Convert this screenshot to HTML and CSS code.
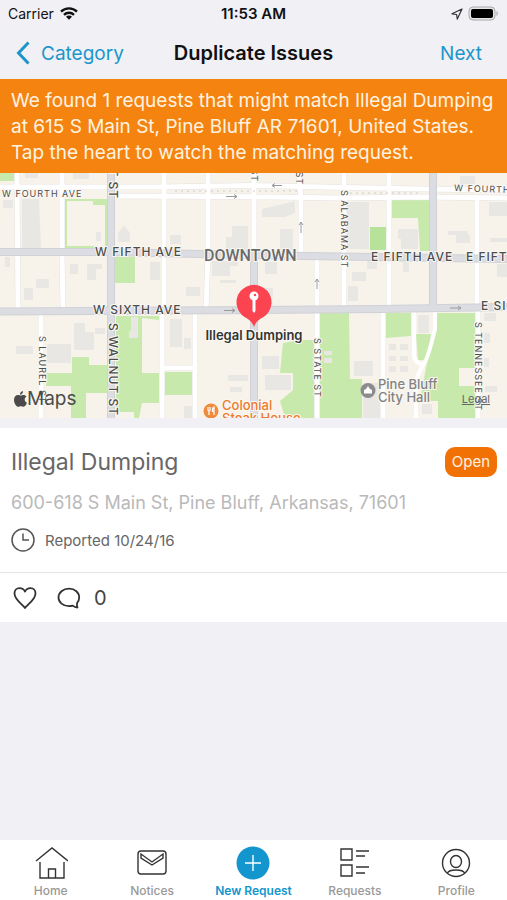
FILE: index.html
```html
<!DOCTYPE html>
<html lang="en">
<head>
  <meta charset="utf-8">
  <meta name="viewport" content="width=device-width, initial-scale=1">
  <title>Duplicate Issues</title>
  <link rel="stylesheet" href="styles.css">
</head>
<body>
  <div class="status-bar">
    <div class="status-left">
      <span>Carrier</span>
      <svg width="18" height="13" viewBox="0 0 18 13" fill="none" stroke="#111" stroke-width="2.4">
        <path d="M1 4.6a11.5 11.5 0 0 1 16 0"/>
        <path d="M4 7.8a7.2 7.2 0 0 1 10 0"/>
        <path d="M9 12.8L6 9.8a4.2 4.2 0 0 1 6 0z" fill="#111" stroke="none"/>
      </svg>
    </div>
    <div class="status-time">11:53 AM</div>
    <div class="status-right">
      <svg width="12" height="12" viewBox="0 0 12 12" fill="none" stroke="#333" stroke-width="1.2" stroke-linejoin="round">
        <path d="M11 1L1 5.8l4.6.7.7 4.6z"/>
      </svg>
      <svg width="31" height="15" viewBox="0 0 31 15">
        <rect x="1" y="1" width="26" height="13" rx="4" fill="#e6e6e6" stroke="#aaa"/>
        <rect x="3" y="3" width="22" height="9" rx="2" fill="#000"/>
        <path d="M28.5 5v5a3 3 0 0 0 0-5z" fill="#aaa"/>
      </svg>
    </div>
  </div>

  <header class="nav-bar">
    <button class="nav-button back" type="button">
      <svg width="14" height="24" viewBox="0 0 14 24" fill="none" stroke="#1b96cb" stroke-width="3">
        <path d="M12.5 1.5L2.5 12l10 10.5"/>
      </svg>
      Category
    </button>
    <h1>Duplicate Issues</h1>
    <button class="nav-button next" type="button">Next</button>
  </header>

  <p class="banner">We found 1 requests that might match Illegal Dumping at 615 S Main St, Pine Bluff AR 71601, United States. Tap the heart to watch the matching request.</p>

  <div class="map">
    <svg class="map-canvas" viewBox="0 0 507 245" preserveAspectRatio="xMidYMid slice">
      <rect width="507" height="245" fill="#f7f3eb"/>

      <!-- buildings -->
      <g fill="#e9e7e4">
        <path d="M22 26h17l2 50H22zM3 27h10v8H3zM25 0h13v5H25zM73 0h16v6H73zM96 59h5v9h-5zM118 60l6-8 6 8v9h-12zM36 106h13v9H36zM24 115h9v12h-9zM5 84h5v10H5zM70 91h8v10h-8zM87 91h15v5h-6v11h-9zM150 89h10v18h-10z"/>
        <path d="M170 62h11v9h-11zM232 53h16v26h-16zM226 64h8v20h-8zM262 36l33-8v12l-10 4h-23zM280 56h13v22h-13zM265 89h12v12h-12zM212 88h26v5h-8v10h-18zM186 114h14v9h-14zM262 115h11v9h-11zM220 107h16v3h-16z"/>
        <path d="M344 29h25v47h-25zM398 56h20v20h-17v-10h-3zM403 89h6v10h-6zM448 58h20v4h-20zM456 62h14v8h-14zM489 29h18v14h-18zM497 91h10v13h-10zM352 99h14v9h-14zM348 113h10v15h-10zM367 88h10v8h-10zM490 65h17v4h-17zM460 3h15v8h-15z"/>
        <path d="M47 171h24v19H47zM74 150h11v9h9v18H74zM16 173h17v8H16zM95 155h10v6H95zM170 146h12v28h-12zM184 165h7v11h-7zM228 202h20v6h-20zM262 183h17v13h-17zM265 202h26v15h-26zM230 214h12v5h-12zM184 233h8v12h-8z"/>
        <path d="M354 188h19v15h-19zM418 142h11v18h-11zM363 210h18v35h-18zM422 231h10v10h-10zM484 140h12v8h-12zM484 160h6v10h-6zM484 185h5v9h-5zM485 213h12v6h-12zM389 171h7v6h-7zM400 171h8v6h-8zM389 183h7v5h-7zM400 183h8v5h-8zM389 193h7v6h-7zM400 193h8v6h-8z"/>
      </g>

      <!-- parks -->
      <g fill="#c7eaac">
        <path d="M0 0h19v8H0zM64 26h43v6H93v-4H67v45h28v4H64zM107 26v50h-2V26zM114 84h21v26h-21z"/>
        <path d="M392 24h38v54h-10l-2-33h-26z"/>
        <path d="M370 54h17l-1 23h-16z" fill="#b7e299"/>
        <path d="M72 184h17v8h19v28H86v25H71v-32H46v-13h26zM116 143h43v4l-17-2v55h18v30h-18l-3 15h-5v-6h-18z"/>
        <path d="M165 199h29v23h-29zM283 170l17-3h14v78h-29l-5-17 13-11v-17h-13zM320 140h29l1 66h12v39h-42zM386 140h25v23l-25 2zM416 161h15l-3 26h-10zM437 140h38v55h-16v18h16v32h-37v-17h-18l4-23z"/>
      </g>
      <path d="M131 144h7v21h-9v-7h2zM324 178h8v4h-8zM324 185h8v5h-8z" fill="#e9e7e4"/>

      <!-- side streets, grey casing under white -->
      <g fill="none">
        <path stroke="#e4e2e0" stroke-width="6" d="M0 14L160 14 250 12.500 300 13.500 420 16 507 17M107 23L230 23.500 340 25 420 24 507 25M17 0l1 136M62 0v80l1 57M164 0v137M208 0v80l-2 57M254 0v80M299 0l2 28v52M317 85v48M344 0v137M389 0v137M477 26v109M41 140v105M162 140v105M195 140v105M162 195h33M317 140v105M383 140v105M478 138v107"/>
        <path stroke="#fff" stroke-width="5" d="M0 14L160 14 250 12.500 300 13.500 420 16 507 17M107 23L230 23.500 340 25 420 24 507 25M17 0l1 136M62 0v80l1 57M164 0v137M208 0v80l-2 57M254 0v80M299 0l2 28v52M317 85v48M344 0v137M389 0v137M477 26v109M41 140v105M162 140v105M195 140v105M162 195h33M317 140v105M383 140v105M478 138v107"/>
        <path stroke="#fff" stroke-width="4" d="M414 138v45q1 7 9 9 4-3 12-36v-18M423 192q-7 12-7 20v33"/>
      </g>

      <!-- main avenues -->
      <g fill="none">
        <path stroke="#d0d1d6" stroke-width="8" d="M0 79h110L200 81l105 2 202 3M0 138.500L170 137.500 380 136 507 134M111 0v245M254 83v162M433 0v136"/>
        <path stroke="#dcdde3" stroke-width="6" d="M0 79h110L200 81l105 2 202 3M0 138.500L170 137.500 380 136 507 134M111 0v245M254 83v162M433 0v136"/>
      </g>

      <!-- one way arrows -->
      <g stroke="#9a9a9a" fill="none">
        <path d="M226 23.500h11m-3-2l3 2-3 2M282 12.500h-10m3-2l-3 2 3 2M301 60V49m-2 3l2-3 2 3M317 116v-10m-2 3l2-3 2 3M224 137.500h11m-3-2l3 2-3 2M450 135h11m-3-2l3 2-3 2"/>
        <path stroke="#ccc" stroke-dasharray="2 4" d="M175 18h125M350 20h70"/>
      </g>

      <!-- street names -->
      <g class="street minor">
        <text x="2" y="23.500">W FOURTH AVE</text>
        <text x="454" y="18" transform="rotate(2 454 18)">W FOURTH AVE</text>
        <text transform="translate(341 17) rotate(90)">S ALABAMA ST</text>
        <text transform="translate(39 163) rotate(90)">S LAUREL ST</text>
        <text transform="translate(314 165) rotate(90)">S STATE ST</text>
        <text transform="translate(475 149) rotate(90)">S TENNESSEE ST</text>
        <text transform="translate(251 9) rotate(90)" text-anchor="end">S MAIN ST</text>
        <text transform="translate(296 12) rotate(90)" text-anchor="end">S PINE ST</text>
      </g>
      <g class="street major">
        <text x="95" y="83">W FIFTH AVE</text>
        <text x="371" y="88">E FIFTH AVE</text>
        <text x="466" y="88">E FIFTH AVE</text>
        <text x="93" y="141">W SIXTH AVE</text>
        <text x="481" y="137">E SIXTH AVE</text>
        <text transform="translate(109 26) rotate(90)" text-anchor="end">S WALNUT ST</text>
        <text transform="translate(109 150) rotate(90)">S WALNUT ST</text>
      </g>
      <text class="district" x="204" y="88">DOWNTOWN</text>

      <!-- places -->
      <circle cx="368" cy="217.500" r="7.500" fill="#8c8c8c"/>
      <path d="M364 220.500h8v-3.500l-2-1-2-3-2 3-2 1z" fill="#fff"/>
      <g class="place">
        <text x="378" y="216">Pine Bluff</text>
        <text x="378" y="229">City Hall</text>
      </g>
      <circle cx="211" cy="238" r="7.500" fill="#f08a3c"/>
      <path d="M208 234v3q0 1 1 1v4M210 234v4M214 242v-8q-2 1-1.500 4.500H214" fill="none" stroke="#fff" stroke-width="1.200"/>
      <g class="place food">
        <text x="222" y="237">Colonial</text>
        <text x="222" y="250">Steak House</text>
      </g>

      <!-- pin -->
      <path d="M254 154c-2-6-6-8-9.500-10a17.500 17.500 0 1 1 19 0c-3.500 2-7.500 4-9.500 10z" fill="#fb4450"/>
      <path d="M252.500 126h3v12l-1.500 2-1.500-2z" fill="#fff"/>
      <circle cx="254" cy="123" r="4.500" fill="#fff"/>
      <circle cx="255" cy="122" r="1.200" fill="#fb4450"/>
      <text class="pin-name" x="254" y="167" text-anchor="middle">Illegal Dumping</text>
    </svg>
    <div class="map-brand">
      <svg width="13" height="16" viewBox="0 0 13 16" fill="#4b4b4b">
        <path d="M9 0c.2 2-1.200 3.700-3 3.700C5.800 2 7.300.3 9 0zM6.700 4.600C7.500 4.600 8.300 4 9.600 4c1.100 0 2.200.6 2.900 1.600-2.600 1.500-2.200 5.100.5 6.200-.6 1.700-2 4-3.500 4-1 0-1.400-.6-2.600-.6s-1.700.6-2.600.6C2.400 15.800 0 12.300 0 9c0-3.200 2-4.900 3.900-4.900 1.200 0 2 .5 2.800.5z"/>
      </svg>
      <span>Maps</span>
    </div>
    <a class="map-legal" href="#">Legal</a>
  </div>

  <main class="card">
    <div class="card-body">
      <div class="card-head">
        <h2>Illegal Dumping</h2>
        <span class="badge">Open</span>
      </div>
      <p class="address">600-618 S Main St, Pine Bluff, Arkansas, 71601</p>
      <div class="reported">
        <svg width="24" height="24" viewBox="0 0 24 24" fill="none" stroke="#555" stroke-width="1.500">
          <circle cx="12" cy="12" r="11"/>
          <path d="M12 5.500V12h6"/>
        </svg>
        <span>Reported 10/24/16</span>
      </div>
    </div>
    <div class="card-actions">
      <button type="button" aria-label="Watch">
        <svg width="24" height="22" viewBox="0 0 24 22" fill="none" stroke="#333" stroke-width="1.800" stroke-linejoin="round">
          <path d="M12 21C9 17 1.500 12.500 1.500 6.500 1.500 3.500 3.500 1.200 6.500 1.200c2.500 0 4.500 1.300 5.500 3.300 1-2 3-3.300 5.500-3.300 3 0 5 2.300 5 5.300C22.500 12.500 15 17 12 21z"/>
        </svg>
      </button>
      <button type="button" aria-label="Comments">
        <svg width="24" height="22" viewBox="0 0 24 22" fill="none" stroke="#333" stroke-width="1.800" stroke-linejoin="round">
          <path d="M20.500 20.500c-2 0-3.500-.7-4.700-1.800-1.200.3-2.500.5-3.800.5C6 19.200 1.500 15.300 1.500 10.500S6 1.700 12 1.700s10.200 3.900 10.200 8.800c0 2.300-1 4.300-2.200 5.800-.2 1.700-.1 3 .5 4.200z"/>
        </svg>
        <span>0</span>
      </button>
    </div>
  </main>

  <nav class="tab-bar">
    <a href="#">
      <svg width="34" height="34" viewBox="0 0 34 34" fill="none" stroke="#333" stroke-width="1.400">
        <path d="M2 15L18 2l16 13M6 16v16h24V16M14.500 32v-9h7v9"/>
      </svg>
      Home
    </a>
    <a href="#">
      <svg width="34" height="34" viewBox="0 0 34 34" fill="none" stroke="#333" stroke-width="1.400">
        <rect x="3" y="5" width="28" height="23" rx="3"/>
        <path d="M6 8v4l11 7 11-7V8l-11 8z"/>
      </svg>
      Notices
    </a>
    <a class="active" href="#">
      <svg width="34" height="34" viewBox="0 0 34 34">
        <circle cx="17" cy="17" r="16.500" fill="#1296cd"/>
        <path d="M17 9v16M9 17h16" stroke="#fff" stroke-width="1.400"/>
      </svg>
      New Request
    </a>
    <a href="#">
      <svg width="34" height="34" viewBox="0 0 34 34" fill="none" stroke="#333" stroke-width="1.400">
        <path d="M3 3h11v11H3zM3 19h11v11H3zM18 5h13M18 10h9M18 21h13M18 27h9"/>
      </svg>
      Requests
    </a>
    <a href="#">
      <svg width="34" height="34" viewBox="0 0 34 34" fill="none" stroke="#333" stroke-width="1.400">
        <circle cx="17" cy="17" r="13.500"/>
        <ellipse cx="17" cy="15.500" rx="5.500" ry="6"/>
        <path d="M8.500 27c1.500-4 15.500-4 17 0"/>
      </svg>
      Profile
    </a>
  </nav>
</body>
</html>
```
FILE: styles.css
```css
* {
  box-sizing: border-box;
}
body {
  margin: 0;
  min-height: 100vh;
  display: flex;
  flex-direction: column;
  background: #f0f0f5;
  color: #111;
  font-family: Inter, "Liberation Sans", sans-serif;
}
h1, h2, p {
  margin: 0;
  font-weight: 400;
}
button {
  padding: 0;
  border: none;
  background: none;
  font-family: inherit;
  cursor: pointer;
}
svg {
  display: block;
}

.status-bar {
  display: grid;
  grid-template-columns: 1fr auto 1fr;
  align-items: center;
  height: 27px;
  padding: 0 8px;
  font-size: 14px;
}
.status-left {
  display: flex;
  align-items: center;
  gap: 6px;
}
.status-time {
  font-size: 15px;
  font-weight: 600;
}
.status-right {
  display: flex;
  align-items: center;
  justify-content: flex-end;
  gap: 5px;
}

.nav-bar {
  display: grid;
  grid-template-columns: 1fr auto 1fr;
  align-items: center;
  height: 52px;
  padding: 0 16px;
}
.nav-bar h1 {
  font-size: 20px;
  font-weight: 600;
}
.nav-button {
  color: #1b96cb;
  font-size: 19px;
}
.back {
  display: flex;
  align-items: center;
  gap: 11px;
  justify-self: start;
}
.next {
  justify-self: end;
  padding-right: 9px;
}

.banner {
  padding: 9px 11px 7px;
  background: #f58310;
  color: #fff3e0;
  font-size: 19px;
  line-height: 26px;
}

.map {
  position: relative;
  overflow: hidden;
}
.map-canvas {
  width: 100%;
  height: auto;
}
.map text {
  paint-order: stroke;
  stroke: #faf8f3;
  stroke-width: 2px;
  stroke-linejoin: round;
}
.street {
  fill: #4d4d4d;
}
.minor {
  font-size: 9px;
  letter-spacing: 1px;
}
.major {
  font-size: 12px;
  font-weight: 500;
  letter-spacing: 1px;
}
.district {
  fill: #6b6b6b;
  font-family: Roboto, sans-serif;
  font-size: 16px;
  font-weight: 500;
}
.place {
  fill: #828282;
  font-size: 13px;
  font-weight: 500;
}
.food {
  fill: #ec7b2f;
}
.pin-name {
  fill: #333;
  font-size: 13px;
  font-weight: 600;
}
.map-brand {
  position: absolute;
  left: 14px;
  bottom: 7px;
  display: flex;
  align-items: center;
  color: #4b4b4b;
  font-size: 19px;
  line-height: 24px;
}
.map-legal {
  position: absolute;
  right: 17px;
  bottom: 12px;
  color: #666;
  font-size: 11px;
  line-height: 14px;
}

.card {
  margin-top: 10px;
  background: #fff;
}
.card-body {
  padding: 18px 10px 20px 11px;
  border-bottom: 1px solid #e4e4e6;
}
.card-head {
  display: flex;
  justify-content: space-between;
  align-items: center;
}
.card-head h2 {
  color: #666;
  font-size: 23px;
  line-height: 32px;
}
.badge {
  padding: 0 7px;
  border-radius: 10px;
  background: #f17105;
  color: #fff3e0;
  font-size: 15px;
  line-height: 30px;
}
.address {
  margin-top: 12px;
  color: #b9b9b9;
  font-size: 18px;
  line-height: 26px;
}
.reported {
  display: flex;
  align-items: center;
  gap: 10px;
  margin-top: 12px;
  color: #666;
  font-size: 15px;
}
.card-actions {
  display: flex;
  align-items: center;
  gap: 20px;
  height: 49px;
  padding: 0 13px;
}
.card-actions button {
  display: flex;
  align-items: center;
  gap: 13px;
  color: #444;
  font-size: 20px;
}

.tab-bar {
  display: grid;
  grid-template-columns: repeat(5, 1fr);
  height: 60px;
  margin-top: auto;
  padding-top: 6px;
  background: #fff;
}
.tab-bar a {
  display: flex;
  flex-direction: column;
  align-items: center;
  gap: 3px;
  color: #999;
  font-size: 12px;
  font-weight: 500;
  line-height: 16px;
  text-decoration: none;
}
.tab-bar .active {
  color: #1296cd;
  font-weight: 600;
}
```
